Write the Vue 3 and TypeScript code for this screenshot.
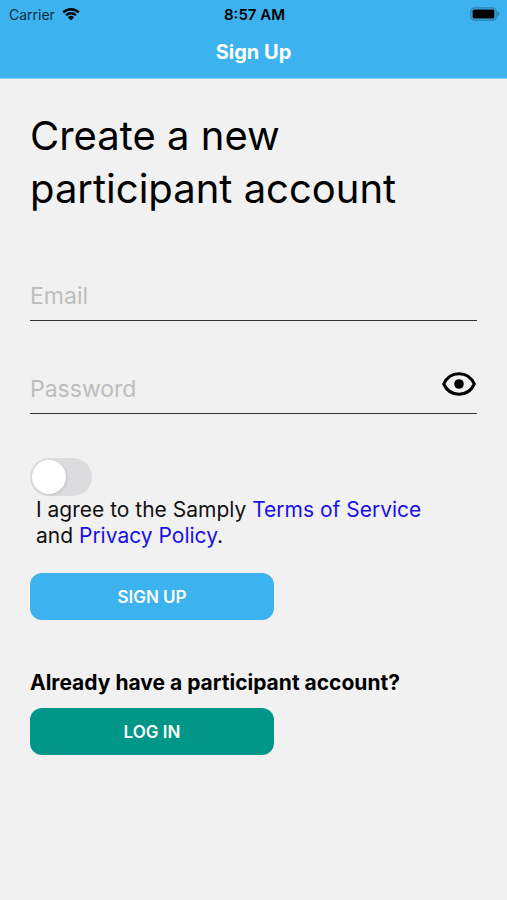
<script setup lang="ts">
import { ref } from 'vue'

const email = ref('')
const password = ref('')
const showPassword = ref(false)
const agreed = ref(false)
</script>

<template>
  <div class="screen">
    <header class="top">
      <div class="status">
        <div class="carrier">
          <span>Carrier</span>
          <svg class="wifi" viewBox="0 0 18 14" aria-hidden="true">
            <path d="M0.4 4.6a12.2 12.2 0 0 1 17.2 0l-1.7 1.7a9.8 9.8 0 0 0-13.8 0z" />
            <path d="M3.2 7.4a8.2 8.2 0 0 1 11.6 0l-1.7 1.7a5.8 5.8 0 0 0-8.2 0z" />
            <path d="M6 10.2a4.3 4.3 0 0 1 6 0l-3 3.2z" />
          </svg>
        </div>
        <span class="time">8:57 AM</span>
        <svg class="battery" viewBox="0 0 31 14" aria-hidden="true">
          <rect x="1.8" y="0.8" width="25.4" height="12.4" rx="3.6" fill="none" stroke="#2a7dab" stroke-width="1.2" />
          <rect x="3.6" y="2.4" width="21.8" height="9.2" rx="1.6" />
          <path d="M28.4 4.6q2 .8 2 2.4t-2 2.4z" fill="#2a7dab" />
        </svg>
      </div>
      <div class="title">Sign Up</div>
    </header>

    <main class="content">
      <h1>Create a new participant account</h1>

      <form @submit.prevent>
        <div class="field">
          <input v-model="email" type="email" placeholder="Email" aria-label="Email" />
        </div>
        <div class="field">
          <input
            v-model="password"
            :type="showPassword ? 'text' : 'password'"
            placeholder="Password"
            aria-label="Password"
          />
          <button class="eye" type="button" aria-label="Show password" @click="showPassword = !showPassword">
            <svg viewBox="0 0 34 24" aria-hidden="true">
              <path
                d="M1.7 12C4.8 5.4 10.3 1.7 17 1.7S29.2 5.4 32.3 12C29.2 18.6 23.7 22.3 17 22.3S4.8 18.6 1.7 12z"
                fill="none"
                stroke="#000"
                stroke-width="3"
                stroke-linejoin="round"
              />
              <circle cx="17" cy="12" r="4.8" />
            </svg>
          </button>
        </div>

        <div class="terms">
          <input id="agree" v-model="agreed" class="switch" type="checkbox" />
          <p>
            <label for="agree">I agree to the Samply</label> <a href="#terms">Terms of Service</a>
            <br />and <a href="#privacy">Privacy Policy</a>.
          </p>
        </div>

        <button class="action" type="submit">SIGN UP</button>
      </form>

      <section class="existing">
        <h2>Already have a participant account?</h2>
        <button class="action login" type="button">LOG IN</button>
      </section>
    </main>
  </div>
</template>

<style>
body {
  background: #f1f1f1;
}
</style>

<style scoped>
.screen {
  min-height: 100vh;
  background: #f1f1f1;
  color: #000;
  font-family: Inter, "Liberation Sans", sans-serif;
}

.top {
  background: #3cb2ee;
  border-bottom: 1px solid #8fd2f4;
}

.status {
  display: grid;
  grid-template-columns: 1fr auto 1fr;
  align-items: center;
  height: 28px;
  padding: 0 7px 0 9px;
  font-size: 14px;
}

.carrier {
  display: flex;
  align-items: center;
  gap: 7px;
  color: #0b2d40;
}

.wifi {
  width: 18px;
  height: 14px;
  fill: #000;
}

.time {
  font-size: 15px;
  font-weight: 600;
}

.battery {
  width: 31px;
  height: 14px;
  justify-self: end;
}

.title {
  padding: 12px 0 14px;
  color: #fff;
  font-size: 20px;
  font-weight: 700;
  line-height: 24px;
  text-align: center;
}

.content {
  padding: 30px;
}

h1 {
  margin: 0;
  max-width: 400px;
  font-size: 40px;
  font-weight: 400;
  line-height: 53px;
}

form {
  margin-top: 56px;
}

.field {
  display: flex;
  align-items: center;
  height: 49px;
  margin-bottom: 43px;
  border-bottom: 1px solid #333;
}

.field input {
  flex: 1;
  min-width: 0;
  height: 49px;
  padding: 0;
  border: 0;
  outline: 0;
  background: none;
  color: #000;
  font: 400 23px Inter, "Liberation Sans", sans-serif;
}

.field input::placeholder {
  color: #bdbdbd;
  opacity: 1;
}

.eye {
  padding: 0 1px 10px 0;
  border: 0;
  background: none;
  cursor: pointer;
}

.eye svg {
  display: block;
  width: 34px;
  height: 24px;
}

.terms {
  padding-top: 1px;
}

.switch {
  display: block;
  appearance: none;
  width: 62px;
  height: 38px;
  margin: 0;
  padding: 2px;
  border-radius: 19px;
  background: #dcdcde;
  cursor: pointer;
}

.switch::before {
  content: "";
  display: block;
  width: 34px;
  height: 34px;
  border-radius: 50%;
  background: #fff;
  box-shadow: 1px 1px 3px rgba(0, 0, 0, 0.12);
}

.switch:checked {
  background: #3cb2ee;
}

.switch:checked::before {
  margin-left: 24px;
}

.terms p {
  margin: 1px 0 0 6px;
  color: #111;
  font-size: 21px;
  line-height: 26px;
}

.terms a {
  color: #1a0fe6;
  text-decoration: none;
}

.action {
  display: block;
  width: 244px;
  height: 47px;
  margin-top: 24px;
  padding: 0;
  border: 0;
  border-radius: 12px;
  background: #3cb2ee;
  color: #fff;
  font: 600 17px Inter, "Liberation Sans", sans-serif;
  cursor: pointer;
}

.existing {
  margin-top: 49px;
}

h2 {
  margin: 0;
  font-size: 21px;
  font-weight: 700;
  line-height: 28px;
}

.login {
  margin-top: 11px;
  background: #009788;
}
</style>
